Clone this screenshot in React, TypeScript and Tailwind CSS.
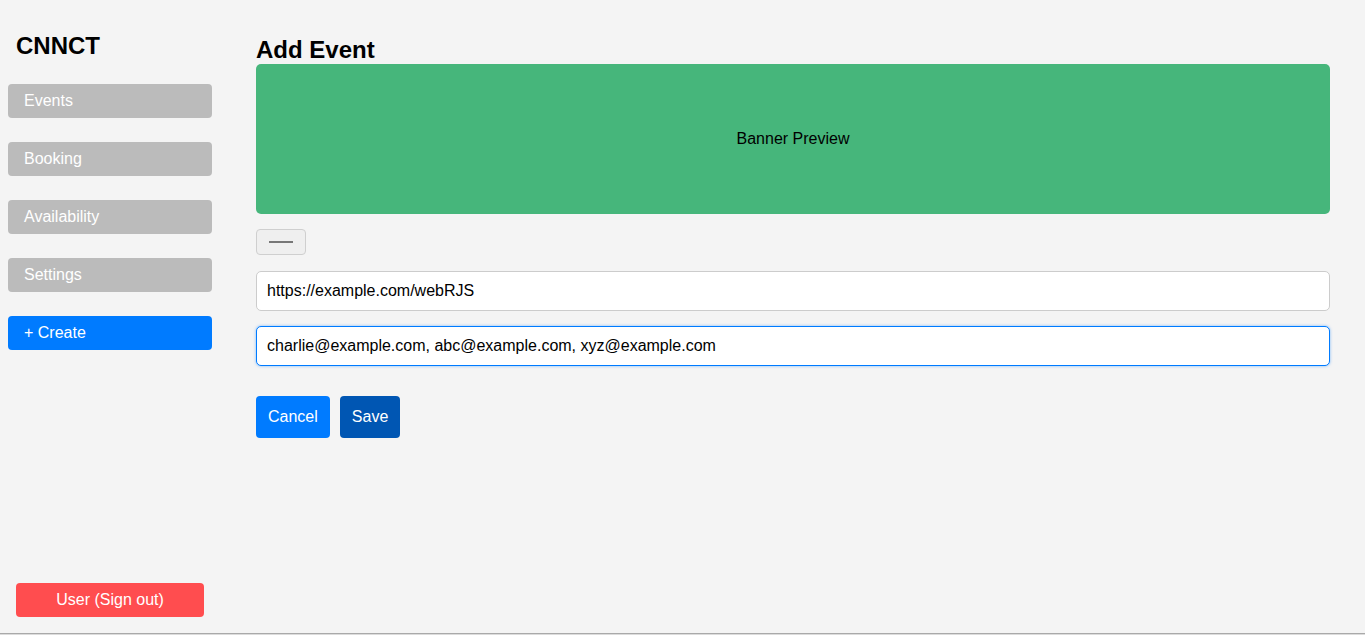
import { useState } from "react";

const navItems = ["Events", "Booking", "Availability", "Settings"];

export default function App() {
  const [link, setLink] = useState("https://example.com/webRJS");
  const [emails, setEmails] = useState(
    "charlie@example.com, abc@example.com, xyz@example.com"
  );

  return (
    <div
      className="flex h-[635px] flex-col bg-[#f4f4f4] text-black"
      style={{ fontFamily: '"Liberation Sans", Arial, sans-serif' }}
    >
      <div className="flex flex-1 border-b border-[#a9a9a9]">
        <aside className="flex w-[220px] shrink-0 flex-col px-2 pt-8 pb-4">
          <h2 className="mb-6 pl-2 text-2xl leading-[27.6px] font-bold">CNNCT</h2>
          <nav className="flex flex-col gap-6">
            {navItems.map((item) => (
              <button
                key={item}
                className="h-[34px] rounded bg-[#bbbbbb] px-4 text-left text-base text-white"
              >
                {item}
              </button>
            ))}
            <button className="h-[34px] rounded bg-[#007bff] px-4 text-left text-base text-white">
              + Create
            </button>
          </nav>
          <div className="mt-auto px-2">
            <button className="h-[34px] w-full rounded bg-[#ff4d4f] text-base text-white">
              User (Sign out)
            </button>
          </div>
        </aside>

        <main className="flex-1 pt-[36px] pr-[35px] pl-[36px]">
          <h1 className="text-2xl leading-[27.6px] font-bold">Add Event</h1>
          <div className="flex h-[150px] items-center justify-center rounded-[5px] bg-[#46b67b] text-base">
            Banner Preview
          </div>

          <button className="mt-[15px] flex h-[26px] w-[50px] items-center justify-center rounded border border-[#cfcfcf] bg-[#efefef]">
            <span className="block h-[2px] w-6 bg-[#777777]" />
          </button>

          <input
            value={link}
            onChange={(e) => setLink(e.target.value)}
            className="mt-4 block h-10 w-full rounded-[5px] border border-[#cccccc] bg-white px-[10px] text-base outline-none"
          />
          <input
            value={emails}
            onChange={(e) => setEmails(e.target.value)}
            className="mt-[15px] block h-10 w-full rounded-[5px] border border-[#007bff] bg-white px-[10px] text-base shadow-[0_0_3px_rgba(0,123,255,0.5)] outline-none"
          />

          <div className="mt-[30px] flex gap-[10px]">
            <button className="h-[42px] rounded bg-[#007bff] px-3 text-base text-white">
              Cancel
            </button>
            <button className="h-[42px] rounded bg-[#0056b3] px-3 text-base text-white">
              Save
            </button>
          </div>
        </main>
      </div>
      <div className="h-[1px] bg-[#dcdcdc]" />
    </div>
  );
}
